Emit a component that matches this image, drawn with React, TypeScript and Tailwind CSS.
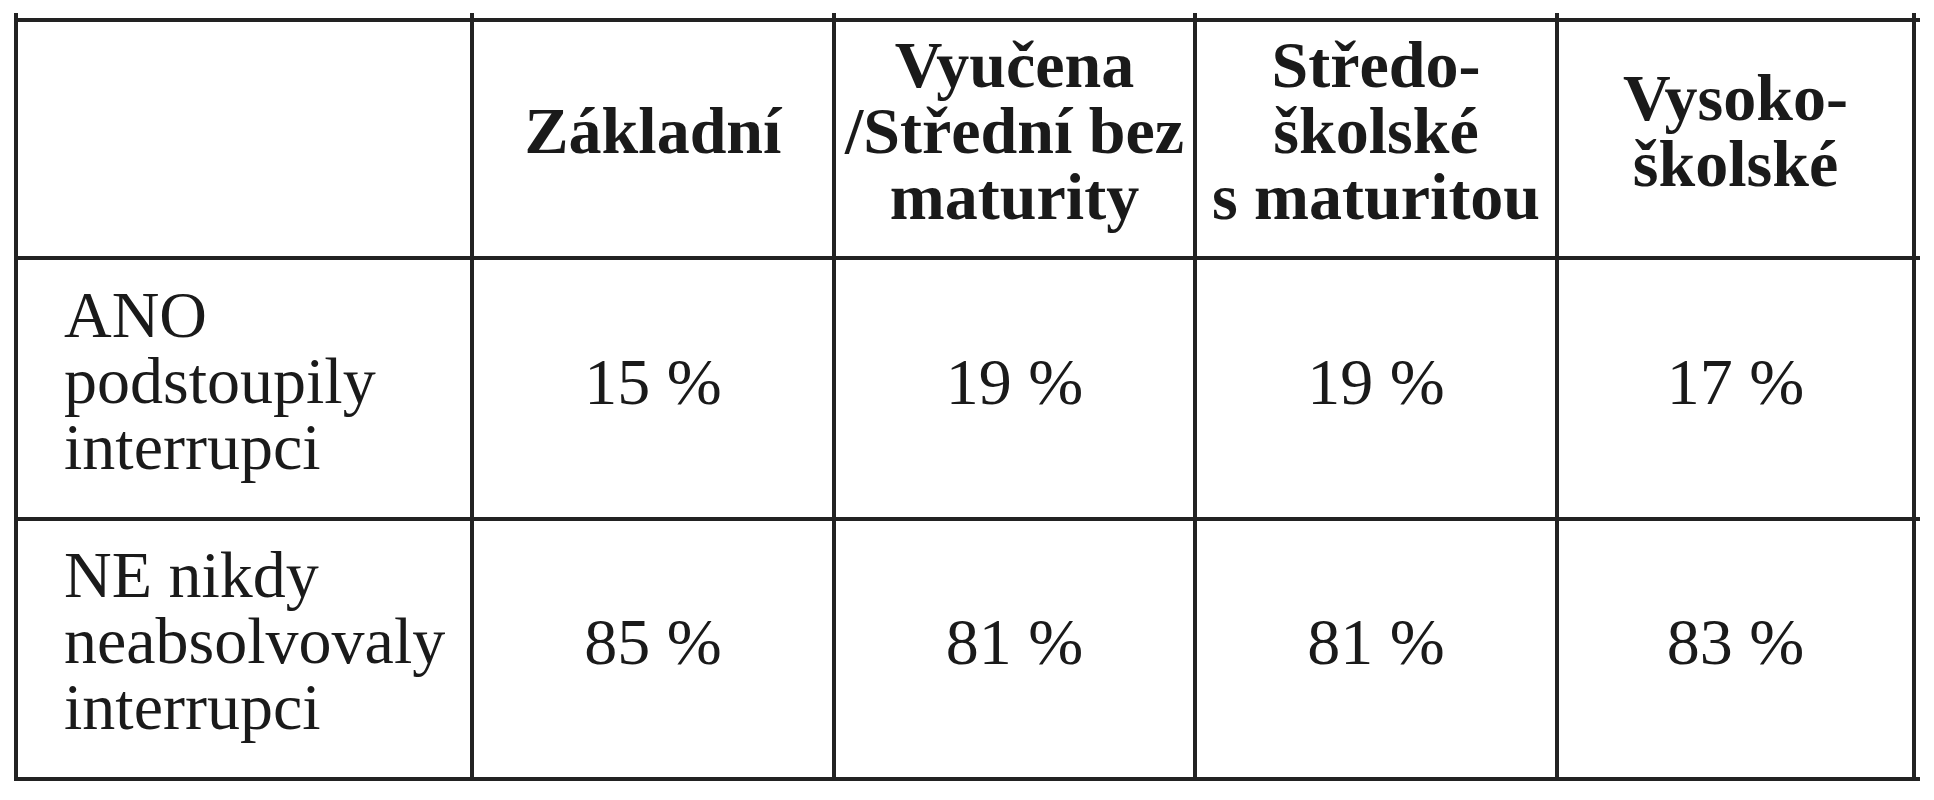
import React from "react";

const headers: React.ReactNode[] = [
  "",
  "Základní",
  <>
    Vyučena
    <br />
    /Střední bez
    <br />
    maturity
  </>,
  <>
    Středo-
    <br />
    školské
    <br />s maturitou
  </>,
  <>
    Vysoko-
    <br />
    školské
  </>,
];

const rows = [
  { label: ["ANO", "podstoupily", "interrupci"], values: ["15 %", "19 %", "19 %", "17 %"] },
  { label: ["NE nikdy", "neabsolvovaly", "interrupci"], values: ["85 %", "81 %", "81 %", "83 %"] },
];

// little overshoot of the ruling lines (top and right edge), as in the printed table
const topTicks = ["left-0", "left-[456px]", "left-[818px]", "left-[1179px]", "left-[1541px]", "left-[1898px]"];
const rightTicks = ["top-0", "top-[238px]", "top-[499px]", "top-[759px]"];

const App = () => {
  return (
    <div className="min-h-[800px] w-[1934px] bg-white pl-[14px] pt-[18px] font-['Liberation_Serif','Times_New_Roman',serif] text-[#1a1a1a]">
      <div className="relative w-max">
        {topTicks.map((c) => (
          <div key={c} className={`absolute -top-[5px] h-[5px] w-[4px] bg-[#222] ${c}`} />
        ))}
        {rightTicks.map((c) => (
          <div key={c} className={`absolute left-[1902px] h-[4px] w-[4px] bg-[#222] ${c}`} />
        ))}
        <div className="grid grid-cols-[456px_362px_361px_362px_357px] grid-rows-[238px_261px_260px] border-l-4 border-t-4 border-[#222]">
          {headers.map((h, i) => (
            <div
              key={i}
              className="flex items-center justify-center border-b-4 border-r-4 border-[#222] pb-[16px] text-center text-[66px] font-bold leading-[66px] whitespace-nowrap"
            >
              <div>{h}</div>
            </div>
          ))}
          {rows.map((row, r) => (
            <React.Fragment key={r}>
              <div className="flex items-center border-b-4 border-r-4 border-[#222] pb-[16px] pl-[46px] text-[66px] leading-[66px] whitespace-nowrap">
                <div>
                  {row.label.map((l, j) => (
                    <div key={j}>{l}</div>
                  ))}
                </div>
              </div>
              {row.values.map((v, j) => (
                <div
                  key={j}
                  className="flex items-center justify-center border-b-4 border-r-4 border-[#222] pb-[14px] text-[66px] leading-[66px]"
                >
                  {v}
                </div>
              ))}
            </React.Fragment>
          ))}
        </div>
      </div>
    </div>
  );
};

export default App;
